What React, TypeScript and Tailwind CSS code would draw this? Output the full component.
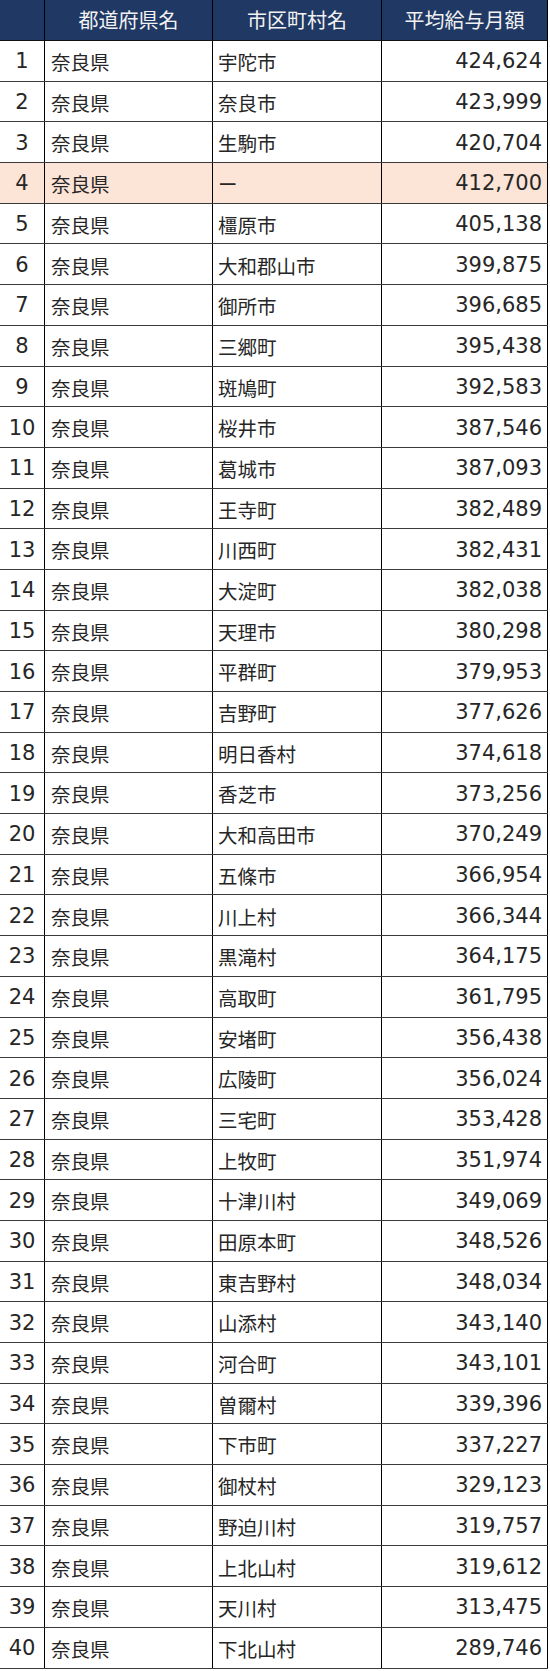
import React from 'react';

const rows: [string, string][] = [
  ['宇陀市', '424,624'],
  ['奈良市', '423,999'],
  ['生駒市', '420,704'],
  ['ー', '412,700'],
  ['橿原市', '405,138'],
  ['大和郡山市', '399,875'],
  ['御所市', '396,685'],
  ['三郷町', '395,438'],
  ['斑鳩町', '392,583'],
  ['桜井市', '387,546'],
  ['葛城市', '387,093'],
  ['王寺町', '382,489'],
  ['川西町', '382,431'],
  ['大淀町', '382,038'],
  ['天理市', '380,298'],
  ['平群町', '379,953'],
  ['吉野町', '377,626'],
  ['明日香村', '374,618'],
  ['香芝市', '373,256'],
  ['大和高田市', '370,249'],
  ['五條市', '366,954'],
  ['川上村', '366,344'],
  ['黒滝村', '364,175'],
  ['高取町', '361,795'],
  ['安堵町', '356,438'],
  ['広陵町', '356,024'],
  ['三宅町', '353,428'],
  ['上牧町', '351,974'],
  ['十津川村', '349,069'],
  ['田原本町', '348,526'],
  ['東吉野村', '348,034'],
  ['山添村', '343,140'],
  ['河合町', '343,101'],
  ['曽爾村', '339,396'],
  ['下市町', '337,227'],
  ['御杖村', '329,123'],
  ['野迫川村', '319,757'],
  ['上北山村', '319,612'],
  ['天川村', '313,475'],
  ['下北山村', '289,746'],
];

export default function App() {
  return (
    <div className="w-[550px] bg-white text-[19.5px] text-[#262626] font-['Noto_Sans_CJK_JP','Noto_Sans',sans-serif] leading-none">
      <div className="w-[548px]">
        {/* Header */}
        <div className="flex h-[41px] bg-[#203864] text-[#f2f2f2] text-[20px] border-b border-[#111]">
          <div className="w-[45px] border-r border-black" />
          <div className="w-[168px] border-r border-black flex items-center justify-center">都道府県名</div>
          <div className="w-[169px] border-r border-black flex items-center justify-center">市区町村名</div>
          <div className="flex-1 border-r border-black flex items-center justify-center">平均給与月額</div>
        </div>

        {/* Rows */}
        {rows.map(([city, amount], i) => (
          <div
            key={i}
            className={`flex h-[40.7px] border-b border-[#3a3a3a] ${i === 3 ? 'bg-[#fce4d6]' : ''}`}
          >
            <div className="w-[45px] border-r border-black flex items-center justify-center pt-[2px] font-['DejaVu_Sans',sans-serif] text-[21px]">{i + 1}</div>
            <div className="w-[168px] border-r border-black flex items-center pl-[6px] pt-[2px]">奈良県</div>
            <div className="w-[169px] border-r border-black flex items-center pl-[5px] pt-[2px]">{city}</div>
            <div className="flex-1 border-r border-black flex items-center justify-end pr-[5px] pt-[2px] font-['DejaVu_Sans',sans-serif] text-[21px]">{amount}</div>
          </div>
        ))}
      </div>
    </div>
  );
}
